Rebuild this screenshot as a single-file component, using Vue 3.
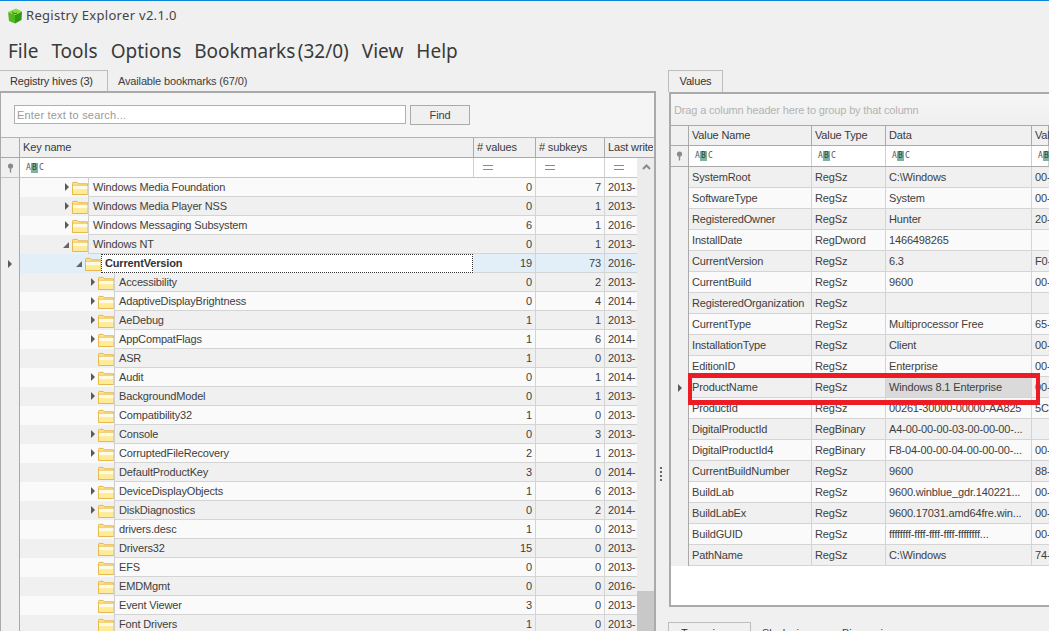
<script setup>
const menu = ['File', 'Tools', 'Options', 'Bookmarks (32/0)', 'View', 'Help']

const keys = [
  { n: 'Windows Media Foundation', l: 1, e: 'c', v: 0, s: 7, d: '2013-' },
  { n: 'Windows Media Player NSS', l: 1, e: 'c', v: 0, s: 1, d: '2013-' },
  { n: 'Windows Messaging Subsystem', l: 1, e: 'c', v: 6, s: 1, d: '2016-' },
  { n: 'Windows NT', l: 1, e: 'o', v: 0, s: 1, d: '2013-' },
  { n: 'CurrentVersion', l: 2, e: 'o', v: 19, s: 73, d: '2016-', sel: true },
  { n: 'Accessibility', l: 3, e: 'c', v: 0, s: 2, d: '2013-' },
  { n: 'AdaptiveDisplayBrightness', l: 3, e: 'c', v: 0, s: 4, d: '2014-' },
  { n: 'AeDebug', l: 3, e: 'c', v: 1, s: 1, d: '2013-' },
  { n: 'AppCompatFlags', l: 3, e: 'c', v: 1, s: 6, d: '2014-' },
  { n: 'ASR', l: 3, e: '', v: 1, s: 0, d: '2013-' },
  { n: 'Audit', l: 3, e: 'c', v: 0, s: 1, d: '2014-' },
  { n: 'BackgroundModel', l: 3, e: 'c', v: 0, s: 1, d: '2013-' },
  { n: 'Compatibility32', l: 3, e: '', v: 1, s: 0, d: '2013-' },
  { n: 'Console', l: 3, e: 'c', v: 0, s: 3, d: '2013-' },
  { n: 'CorruptedFileRecovery', l: 3, e: 'c', v: 2, s: 1, d: '2013-' },
  { n: 'DefaultProductKey', l: 3, e: '', v: 3, s: 0, d: '2014-' },
  { n: 'DeviceDisplayObjects', l: 3, e: 'c', v: 1, s: 6, d: '2013-' },
  { n: 'DiskDiagnostics', l: 3, e: 'c', v: 0, s: 2, d: '2014-' },
  { n: 'drivers.desc', l: 3, e: '', v: 1, s: 0, d: '2013-' },
  { n: 'Drivers32', l: 3, e: '', v: 15, s: 0, d: '2013-' },
  { n: 'EFS', l: 3, e: '', v: 0, s: 0, d: '2013-' },
  { n: 'EMDMgmt', l: 3, e: '', v: 0, s: 0, d: '2016-' },
  { n: 'Event Viewer', l: 3, e: '', v: 3, s: 0, d: '2013-' },
  { n: 'Font Drivers', l: 3, e: '', v: 1, s: 0, d: '2013-' },
]

const values = [
  ['SystemRoot', 'RegSz', 'C:\\Windows', '00-'],
  ['SoftwareType', 'RegSz', 'System', '00-'],
  ['RegisteredOwner', 'RegSz', 'Hunter', '20-'],
  ['InstallDate', 'RegDword', '1466498265', ''],
  ['CurrentVersion', 'RegSz', '6.3', 'F0-'],
  ['CurrentBuild', 'RegSz', '9600', '00-'],
  ['RegisteredOrganization', 'RegSz', '', ''],
  ['CurrentType', 'RegSz', 'Multiprocessor Free', '65-'],
  ['InstallationType', 'RegSz', 'Client', '00-'],
  ['EditionID', 'RegSz', 'Enterprise', '00-'],
  ['ProductName', 'RegSz', 'Windows 8.1 Enterprise', '00-'],
  ['ProductId', 'RegSz', '00261-30000-00000-AA825', '5C'],
  ['DigitalProductId', 'RegBinary', 'A4-00-00-00-03-00-00-00-...', ''],
  ['DigitalProductId4', 'RegBinary', 'F8-04-00-00-04-00-00-00-...', '00-'],
  ['CurrentBuildNumber', 'RegSz', '9600', '88-'],
  ['BuildLab', 'RegSz', '9600.winblue_gdr.140221...', '00-'],
  ['BuildLabEx', 'RegSz', '9600.17031.amd64fre.win...', '00-'],
  ['BuildGUID', 'RegSz', 'ffffffff-ffff-ffff-ffff-ffffffff...', '00-'],
  ['PathName', 'RegSz', 'C:\\Windows', '74-'],
]
const selectedValue = 10
const indent = (l) => ({ width: 13 * l + 55 + 'px' })
</script>

<template>
  <div class="app">
    <header class="titlebar">
      <svg class="logo" width="16" height="16" viewBox="0 0 16 16">
        <polygon points="1,4 8,7 8,15.5 2,13" fill="#4fb81e" />
        <polygon points="8,7 15,3.5 14.5,12 8,15.5" fill="#2f9a12" />
        <polygon points="1,4 9,0.5 15,3.5 8,7" fill="#86de3a" />
        <path d="M5.5 3.5 L6.5 6 L10 5" stroke="#2d7a10" stroke-width="1" fill="none" />
      </svg>
      <span class="title">Registry Explorer v2.1.0</span>
    </header>

    <nav class="menubar">
      <span v-for="m in menu" :key="m">{{ m }}</span>
    </nav>

    <main class="workspace">
      <section class="left">
        <div class="tabs">
          <div class="tab active">Registry hives (3)</div>
          <div class="tab">Available bookmarks (67/0)</div>
        </div>
        <div class="left-panel">
          <div class="search">
            <div class="search-input">Enter text to search...</div>
            <div class="find">Find</div>
          </div>

          <div class="lhead">
            <div class="ind"></div>
            <div class="lc-name hcell">Key name</div>
            <div class="lc-val hcell">&#35; values</div>
            <div class="lc-sub hcell">&#35; subkeys</div>
            <div class="lc-lastfull hcell">Last write</div>
          </div>

          <div class="lbody">
            <div class="lrows">
              <div class="lfilter">
                <div class="ind pin-cell">
                  <svg width="7" height="10" viewBox="0 0 7 10"><circle cx="3.5" cy="3" r="2.6" fill="#8a8a8a" /><rect x="2.8" y="4" width="1.4" height="5.5" fill="#8a8a8a" /></svg>
                </div>
                <div class="lc-name fcell"><span class="abc"><i>A</i><b>B</b><i>C</i></span></div>
                <div class="lc-val fcell"><span class="eq"></span></div>
                <div class="lc-sub fcell"><span class="eq"></span></div>
                <div class="lc-last fcell"><span class="eq"></span></div>
              </div>

              <div v-for="(k, i) in keys" :key="k.n" class="lrow" :class="{ alt: i % 2 === 1, sel: k.sel }">
                <div class="ind"><span v-if="k.sel" class="arrow"></span></div>
                <div class="lc-name tree">
                  <div class="tree-gutter" :style="indent(k.l)">
                    <span v-if="k.e === 'c'" class="arrow"></span>
                    <span v-else-if="k.e === 'o'" class="open-arrow"></span>
                    <svg class="folder" width="16" height="14" viewBox="0 0 17 15" preserveAspectRatio="none">
                      <path d="M.5 14.5V2.5q0-1 1-1h4l1.5 1.5h9.500v11.500z" fill="#fbe68f" stroke="#e5b03f" />
                      <rect x="1" y="5" width="15.500" height="4" fill="#fffbe2" />
                      <rect x="1" y="9" width="15.500" height="5" fill="#fdeb98" />
                      <path d="M.5 4.500h16" stroke="#eec363" />
                    </svg>
                  </div>
                  <div class="tree-label" :class="{ focus: k.sel }">{{ k.n }}</div>
                </div>
                <div class="lc-val dcell num">{{ k.v }}</div>
                <div class="lc-sub dcell num">{{ k.s }}</div>
                <div class="lc-last dcell">{{ k.d }}</div>
              </div>
            </div>
            <div class="scrollbar">
              <svg class="up" width="9" height="6" viewBox="0 0 9 6"><path d="M1 5l3.500-3.500L8 5" fill="none" stroke="#8a8a8a" stroke-width="2" /></svg>
              <div class="thumb"></div>
            </div>
          </div>
        </div>
      </section>

      <div class="splitter"><i></i><i></i><i></i><i></i></div>

      <section class="right">
        <div class="tabs right-tabs">
          <div class="tab active">Values</div>
        </div>
        <div class="right-panel">
          <div class="group">Drag a column header here to group by that column</div>
          <div class="rhead">
            <div class="rind"></div>
            <div class="rc-name hcell">Value Name</div>
            <div class="rc-type hcell">Value Type</div>
            <div class="rc-data hcell">Data</div>
            <div class="rc-val hcell">Val</div>
          </div>
          <div class="rfilter">
            <div class="rind pin-cell">
              <svg width="7" height="10" viewBox="0 0 7 10"><circle cx="3.500" cy="3" r="2.600" fill="#8a8a8a" /><rect x="2.800" y="4" width="1.400" height="5.500" fill="#8a8a8a" /></svg>
            </div>
            <div v-for="c in ['rc-name', 'rc-type', 'rc-data', 'rc-val']" :key="c" :class="c" class="fcell">
              <span class="abc"><i>A</i><b>B</b><i>C</i></span>
            </div>
          </div>
          <div class="rrows">
            <div v-for="(r, i) in values" :key="r[0]" class="rrow" :class="{ alt: i % 2 === 0 }">
              <div class="rind"><span v-if="i === selectedValue" class="arrow"></span></div>
              <div class="rc-name dcell">{{ r[0] }}</div>
              <div class="rc-type dcell">{{ r[1] }}</div>
              <div class="rc-data dcell" :class="{ hit: i === selectedValue }">{{ r[2] }}</div>
              <div class="rc-val dcell">{{ r[3] }}</div>
            </div>
          </div>
          <div class="highlight"></div>
        </div>
        <div class="tabs bottom-tabs">
          <div class="tab active">Type viewer</div>
          <div class="tab">Slack viewer</div>
          <div class="tab">Binary viewer</div>
        </div>
      </section>
    </main>
  </div>
</template>

<style>
html, body { margin: 0; background: #f0f0f0; }
</style>

<style scoped>
.app {
  width: 1049px;
  height: 631px;
  box-sizing: border-box;
  border-top: 1px solid #0a84d8;
  overflow: hidden;
  display: flex;
  flex-direction: column;
  background: #f0f0f0;
  color: #3e3e3e;
  font: 11px/1 "Liberation Sans", "Noto Sans", sans-serif;
  letter-spacing: -.15px;
}
.titlebar {
  height: 29px;
  flex: none;
  display: flex;
  align-items: center;
  padding-left: 7px;
  gap: 3px;
}
.title { font: 13px/1 "Noto Sans", sans-serif; letter-spacing: .3px; color: #444; }
.menubar {
  height: 40px;
  flex: none;
  box-sizing: border-box;
  padding-top: 2px;
  display: flex;
  align-items: center;
  gap: 13px;
  padding-left: 8px;
  font: 19px/1 "Noto Sans", sans-serif;
  letter-spacing: 0;
  word-spacing: -2.500px;
  color: #3a3a3a;
}
.workspace { flex: 1; min-height: 0; display: flex; }

.tabs { display: flex; height: 21px; flex: none; }
.tab {
  padding: 0 10px;
  display: flex;
  align-items: center;
  white-space: nowrap;
  box-sizing: border-box;
  border: 1px solid transparent;
  border-bottom: 0;
}
.tab.active { border-color: #bdbdbd; color: #333; }

.left { width: 656px; flex: none; display: flex; flex-direction: column; min-height: 0; }
.left .tab.active { width: 108px; padding: 0 0 0 10px; border-left: 0; }
.left .tab + .tab { padding-left: 9px; }
.left-panel {
  flex: 1;
  min-height: 0;
  display: flex;
  flex-direction: column;
  border: 1px solid #aaa;
  border-top-width: 2px;
  border-right-width: 2px;
  border-bottom: 0;
  background: #f5f5f5;
}
.search {
  height: 44px;
  flex: none;
  box-sizing: border-box;
  padding: 12px 0 0 13px;
  display: flex;
  gap: 4px;
  align-items: flex-start;
}
.search-input {
  width: 392px;
  height: 19px;
  box-sizing: border-box;
  background: #fff;
  border: 1px solid #b0b0b0;
  color: #9a9a9a;
  padding: 1px 0 0 2px;
  letter-spacing: .2px;
  display: flex;
  align-items: center;
}
.find {
  width: 60px;
  height: 20px;
  box-sizing: border-box;
  border: 1px solid #aaa;
  background: #f0f0f0;
  display: flex;
  align-items: center;
  justify-content: center;
}

.lhead, .lfilter, .lrow { display: flex; }
.lhead {
  height: 21px;
  flex: none;
  box-sizing: border-box;
  border-top: 1px solid #b4b4b4;
  border-bottom: 1px solid #aaa;
  background: #f0f0f0;
}
.ind {
  width: 19px;
  flex: none;
  box-sizing: border-box;
  border-right: 1px solid #aaa;
  background: #f0f0f0;
  display: flex;
  align-items: center;
  justify-content: center;
}
.lc-name { width: 454px; flex: none; box-sizing: border-box; }
.lc-val { width: 62px; flex: none; box-sizing: border-box; }
.lc-sub { width: 69px; flex: none; box-sizing: border-box; }
.lc-last { width: 32px; flex: none; box-sizing: border-box; overflow: hidden; }
.lc-lastfull { width: 48px; flex: none; box-sizing: border-box; overflow: hidden; white-space: nowrap; }

.hcell {
  display: flex;
  align-items: center;
  padding-left: 3px;
  border-right: 1px solid #aaa;
  color: #3a3a3a;
}
.lc-lastfull.hcell { border-right: 0; }

.lbody { flex: 1; min-height: 0; display: flex; overflow: hidden; }
.lrows { width: 636px; flex: none; overflow: hidden; }
.lfilter { height: 20px; background: #fff; box-sizing: border-box; border-bottom: 1px solid #c4c4c4; }
.fcell {
  display: flex;
  align-items: center;
  padding-left: 6px;
  border-right: 1px solid #d0d0d0;
}
.lfilter .lc-last.fcell { border-right: 0; }
.pin-cell { background: #f0f0f0; }
.eq {
  width: 10px;
  height: 3px;
  margin-left: 3px;
  border-top: 1px solid #8a8a8a;
  border-bottom: 1px solid #8a8a8a;
}
.abc { display: inline-flex; align-items: center; height: 10px; font: 8px/10px "DejaVu Sans Mono", monospace; letter-spacing: 0; color: #555; }
.abc i { font-style: normal; width: 4px; text-align: center; }
.abc b { font-weight: 400; width: 7px; height: 10px; text-align: center; background: #7fb3a0; color: #1f4a3c; margin: 0 1px; }

.lrow { height: 19px; background: #fafafa; }
.lrow.alt { background: #f0f0f0; }
.lrow.sel { background: #e3eff8; }
.lrow > .ind { background: #f0f0f0; }
.tree { display: flex; align-items: stretch; }
.tree-gutter { flex: none; position: relative; }
.folder { position: absolute; right: 0; top: 3px; }
.tree-label {
  flex: 1;
  min-width: 0;
  box-sizing: border-box;
  border-left: 1px solid #cfcfcf;
  border-bottom: 1px solid #d4d4d4;
  padding-left: 4px;
  display: flex;
  align-items: center;
  white-space: nowrap;
}
.tree-label.focus {
  background: #fff;
  border: 1px dotted #333;
  margin-right: 1px;
  padding-left: 3px;
  font-weight: 700;
  color: #333;
}
.arrow {
  display: inline-block;
  width: 0;
  height: 0;
  border-left: 4px solid #5a5a5a;
  border-top: 4px solid transparent;
  border-bottom: 4px solid transparent;
}
.tree-gutter .arrow { position: absolute; top: 5px; right: 19px; }
.open-arrow {
  position: absolute;
  top: 7px;
  right: 19px;
  width: 0;
  height: 0;
  border-bottom: 6px solid #666;
  border-left: 6px solid transparent;
}
.dcell {
  display: flex;
  align-items: center;
  padding: 0 3px;
  border-right: 1px solid #d4d4d4;
  border-bottom: 1px solid #d4d4d4;
  white-space: nowrap;
}
.lrow .lc-last { border-right: 0; }
.num { justify-content: flex-end; }
.scrollbar {
  width: 18px;
  flex: none;
  background: #ececec;
  display: flex;
  flex-direction: column;
  align-items: center;
}
.up { margin-top: 6px; }
.thumb { width: 100%; height: 40px; margin-top: auto; background: #c8c8c8; }

.splitter {
  width: 12px;
  flex: none;
  display: flex;
  flex-direction: column;
  align-items: center;
  gap: 2px;
  padding-top: 397px;
  box-sizing: border-box;
  margin-left: -1px;
  margin-right: 1px;
}
.splitter i { width: 2px; height: 2px; background: #666; flex: none; }

.right { flex: 1; min-width: 0; min-height: 0; display: flex; flex-direction: column; }
.right-tabs { height: 22px; }
.right-tabs .tab.active { width: 55px; justify-content: center; padding: 0; }
.right-panel {
  position: relative;
  height: 515px;
  flex: none;
  box-sizing: border-box;
  margin-left: 1px;
  background: #fff;
  border-left: 2px solid #aaa;
  border-top: 2px solid #aaa;
  border-bottom: 2px solid #aaa;
  overflow: hidden;
}
.group {
  height: 32px;
  box-sizing: border-box;
  display: flex;
  align-items: center;
  padding: 1px 0 0 3px;
  color: #b2b2b2;
  background: linear-gradient(#f6f6f6, #efefef);
  border-bottom: 1px solid #aaa;
}
.rhead, .rfilter, .rrow { display: flex; }
.rhead { height: 20px; box-sizing: border-box; background: #f0f0f0; border-bottom: 1px solid #aaa; }
.rfilter { height: 21px; box-sizing: border-box; background: #fff; border-bottom: 1px solid #aaa; }
.rind {
  width: 18px;
  flex: none;
  box-sizing: border-box;
  border-right: 1px solid #aaa;
  background: #f0f0f0;
  display: flex;
  align-items: center;
  justify-content: center;
}
.rc-name { width: 123px; flex: none; box-sizing: border-box; }
.rc-type { width: 74px; flex: none; box-sizing: border-box; }
.rc-data { width: 146px; flex: none; box-sizing: border-box; }
.rc-val { flex: 1; min-width: 0; box-sizing: border-box; }
.rhead .hcell { padding-left: 3px; }
.rfilter .fcell { padding-left: 6px; }
.rrow { height: 21px; background: #fafafa; }
.rrow.alt { background: #f0f0f0; }
.rrow .dcell { padding-left: 3px; overflow: hidden; }
.rrow .rc-val { border-right: 0; padding-right: 0; }
.hit { background: #dadada; }
.highlight {
  position: absolute;
  left: 17px;
  top: 279px;
  width: 352px;
  height: 32px;
  box-sizing: border-box;
  border: 4px solid #ed1c24;
  border-top-width: 5px;
  border-bottom-width: 5px;
  pointer-events: none;
}
.bottom-tabs { margin-top: 15px; gap: 0; }
.bottom-tabs .tab { padding: 5px 0 0 12px; align-items: flex-start; width: 83px; }
.bottom-tabs .tab.active { justify-content: center; padding: 5px 0 0; }
.bottom-tabs .tab + .tab { width: 80px; padding-left: 10px; }
</style>
